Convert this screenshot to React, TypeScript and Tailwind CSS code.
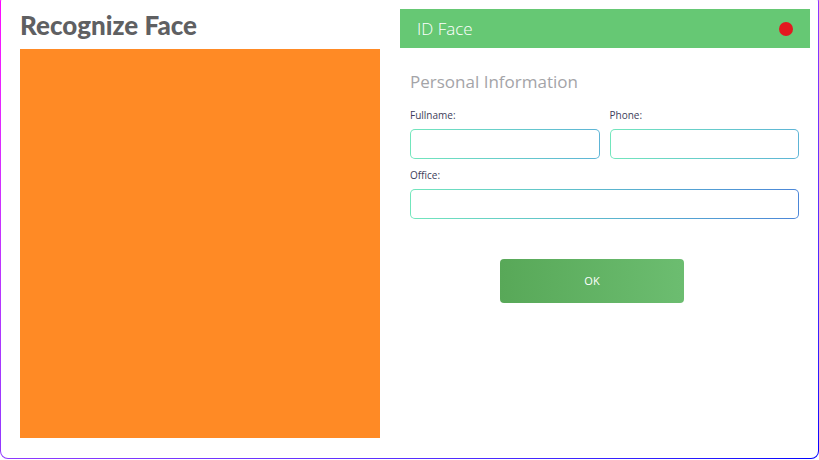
function Field({ label, wide }: { label: string; wide?: boolean }) {
  return (
    <div className="flex flex-col">
      <label className="text-[10px] leading-[14px] text-[#3d3d5a]">{label}</label>
      <div
        className={
          "mt-[7px] h-[30px] rounded-[5px] p-px bg-linear-to-r " +
          (wide ? "from-[#72e6bc] to-[#4c86d8]" : "from-[#72e6bc] to-[#5eb4d6]")
        }>
        <input className="block h-full w-full rounded-[4px] bg-white outline-none" />
      </div>
    </div>
  );
}

export default function App() {
  return (
    <div className="h-[460px] w-[819px] overflow-hidden bg-white" style={{ fontFamily: '"Open Sans", sans-serif' }}>
      <div className="-mt-[6px] h-[465px] rounded-[8px] p-px bg-linear-to-br from-[#ff00ff] to-[#0000ff]">
        <div className="flex h-full gap-5 rounded-[7px] bg-white pl-[19px] pr-[7px] pt-[14px]">
          <div className="flex w-[360px] flex-col">
            <h1
              className="text-[26px] font-black leading-[32px] text-[#5f6062]"
              style={{ fontFamily: 'Lato, sans-serif' }}>
              Recognize Face
            </h1>
            <div className="mt-2 h-[389px] bg-[#ff8a25]" />
          </div>

          <div className="flex w-[410px] flex-col">
            <div className="flex h-[39px] items-center justify-between bg-[#66c874] pl-[17px] pr-[17px]">
              <span className="text-[17px] font-light text-white">ID Face</span>
              <span className="h-[14px] w-[14px] rounded-full bg-[#e3191f]" />
            </div>

            <div className="flex flex-col pl-[10px] pr-[11px]">
              <h2 className="mt-[22px] text-[17px] leading-[24px] text-[#a4a4a8]">Personal Information</h2>

              <div className="mt-[14px] grid grid-cols-2 gap-[10px]">
                <Field label="Fullname:" />
                <Field label="Phone:" />
              </div>

              <div className="mt-[9px]">
                <Field label="Office:" wide />
              </div>

              <button className="ml-[90px] mt-[40px] h-[44px] w-[184px] rounded-[4px] bg-linear-to-r from-[#58a858] to-[#6cbd70] text-[11px] text-white">
                OK
              </button>
            </div>
          </div>
        </div>
      </div>
    </div>
  );
}
